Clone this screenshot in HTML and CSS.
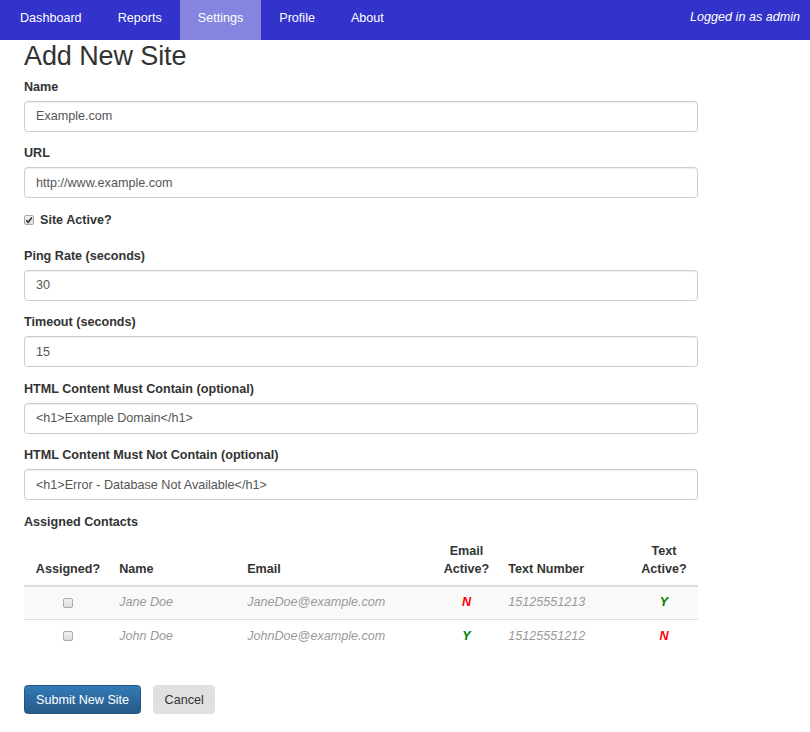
FILE: index.html
```html
<!DOCTYPE html>
<html lang="en">
<head>
    <meta charset="UTF-8">
    <title>Add New Site</title>
    <link rel="stylesheet" href="styles.css">
</head>
<body>
    <div class="navbar">
        <ul class="nav">
            <li><a href="#">Dashboard</a></li>
            <li><a href="#">Reports</a></li>
            <li class="active"><a href="#">Settings</a></li>
            <li><a href="#">Profile</a></li>
            <li><a href="#">About</a></li>
        </ul>
        <div class="user">Logged in as admin</div>
    </div>

    <div class="page">
        <h2>Add New Site</h2>
        <form class="site-form">
            <div class="group">
                <label>Name</label>
                <input class="field" type="text" value="Example.com">
            </div>
            <div class="group">
                <label>URL</label>
                <input class="field" type="text" value="http://www.example.com">
            </div>
            <div class="check-row">
                <span class="box"><svg width="8" height="8" viewBox="0 0 8 8"><path d="M1.2 4.2 L3.2 6.2 L6.8 1.6" fill="none" stroke="#333" stroke-width="1.6"/></svg></span>
                <span class="check-label">Site Active?</span>
            </div>
            <div class="group">
                <label>Ping Rate (seconds)</label>
                <input class="field" type="text" value="30">
            </div>
            <div class="group">
                <label>Timeout (seconds)</label>
                <input class="field" type="text" value="15">
            </div>
            <div class="group">
                <label>HTML Content Must Contain (optional)</label>
                <input class="field" type="text" value="<h1>Example Domain</h1>">
            </div>
            <div class="group">
                <label>HTML Content Must Not Contain (optional)</label>
                <input class="field" type="text" value="<h1>Error - Database Not Available</h1>">
            </div>

            <label class="contacts-label">Assigned Contacts</label>
            <table class="contacts">
                <colgroup>
                    <col style="width: 88px">
                    <col style="width: 128px">
                    <col style="width: 192px">
                    <col style="width: 69px">
                    <col style="width: 129px">
                    <col style="width: 68px">
                </colgroup>
                <thead>
                    <tr>
                        <th class="center">Assigned?</th>
                        <th>Name</th>
                        <th>Email</th>
                        <th class="center">Email<br>Active?</th>
                        <th>Text Number</th>
                        <th class="center">Text<br>Active?</th>
                    </tr>
                </thead>
                <tbody>
                    <tr class="striped">
                        <td class="center"><span class="box empty"></span></td>
                        <td class="muted">Jane Doe</td>
                        <td class="muted">JaneDoe@example.com</td>
                        <td class="center no">N</td>
                        <td class="muted">15125551213</td>
                        <td class="center yes">Y</td>
                    </tr>
                    <tr>
                        <td class="center"><span class="box empty"></span></td>
                        <td class="muted">John Doe</td>
                        <td class="muted">JohnDoe@example.com</td>
                        <td class="center yes">Y</td>
                        <td class="muted">15125551212</td>
                        <td class="center no">N</td>
                    </tr>
                </tbody>
            </table>

            <div class="actions">
                <button type="button" class="btn btn-primary">Submit New Site</button>
                <button type="button" class="btn btn-default">Cancel</button>
            </div>
        </form>
    </div>
</body>
</html>
```

FILE: styles.css
```css
body {
    margin: 0;
    font-family: "Liberation Sans", Arial, sans-serif;
    font-size: 12.6px;
    line-height: 18px;
    color: #333;
    background: #fff;
}
.navbar {
    display: flex;
    justify-content: space-between;
    height: 40px;
    background: #3333cc;
}
.nav {
    display: flex;
    list-style: none;
    margin: 0;
    padding: 0 0 0 2px;
}
.nav a {
    display: block;
    height: 40px;
    box-sizing: border-box;
    padding: 9px 18px 13px;
    color: #fff;
    text-decoration: none;
}
.nav .active a {
    background: #8585e0;
}
.user {
    padding: 8px 10px 0 0;
    color: #fff;
    font-style: italic;
}
.page {
    padding: 0 24px;
}
h2 {
    margin: 2px 0 6px;
    font-size: 27px;
    font-weight: normal;
    line-height: 1.1;
    color: #333;
    letter-spacing: -0.1px;
}
.site-form {
    width: 674px;
}
.group {
    margin-bottom: 12.5px;
}
label {
    display: block;
    margin-bottom: 5px;
    font-weight: bold;
}
.field {
    display: block;
    width: 100%;
    height: 31px;
    box-sizing: border-box;
    padding: 5px 11px;
    border: 1px solid #ccc;
    border-radius: 3.6px;
    box-shadow: inset 0 1px 1px rgba(0, 0, 0, .075);
    font-family: inherit;
    font-size: 12.6px;
    color: #555;
}
.check-row {
    display: flex;
    align-items: center;
    margin: 2px 0 18px;
}
.box {
    display: inline-flex;
    align-items: center;
    justify-content: center;
    width: 10px;
    height: 10px;
    box-sizing: border-box;
    border: 1px solid #ababab;
    border-radius: 2px;
    background: linear-gradient(#f2f2f2, #dcdcdc);
    vertical-align: middle;
}
.check-row .box {
    margin-right: 6px;
}
.check-label {
    font-weight: bold;
}
.contacts-label {
    margin: 3px 0 4px;
}
.contacts {
    width: 674px;
    table-layout: fixed;
    border-collapse: separate;
    border-spacing: 0;
}
.contacts th,
.contacts td {
    padding: 7.2px;
    text-align: left;
}
.contacts th {
    vertical-align: bottom;
    border-bottom: 2px solid #ddd;
}
.contacts td {
    padding: 6.2px 7.2px 8.2px;
}
.contacts tbody tr + tr td {
    border-top: 1px solid #ddd;
}
.contacts .center {
    text-align: center;
}
.striped td {
    background: #f9f9f9;
}
.muted {
    color: #999;
    font-style: italic;
}
.yes,
.no {
    font-weight: bold;
    font-style: italic;
}
.yes {
    color: #008000;
}
.no {
    color: #ff0000;
}
.actions {
    display: flex;
    gap: 12px;
    padding-top: 32px;
}
.btn {
    padding: 4.7px 11px;
    border: 1px solid transparent;
    border-radius: 3.6px;
    font-family: inherit;
    font-size: 12.6px;
    line-height: 18px;
    cursor: pointer;
}
.btn-primary {
    color: #fff;
    background: linear-gradient(#337ab7, #265a88);
    border-color: #245580;
}
.btn-default {
    padding: 4.7px 10.5px;
    color: #333;
    background: #e0e0e0;
    border-color: #e0e0e0;
}
```
